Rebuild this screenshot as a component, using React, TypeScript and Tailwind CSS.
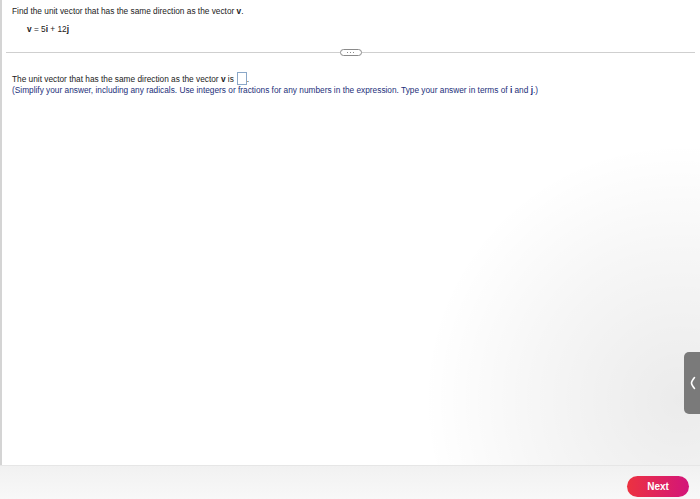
import React from "react";

const App = () => {
  return (
    <div
      className="relative flex h-[499px] w-[700px] flex-col overflow-hidden bg-white text-[#222]"
      style={{ fontFamily: '"Liberation Sans", Arial, sans-serif' }}
    >
      {/* soft shade on the right side */}
      <div className="pointer-events-none absolute right-[-240px] top-[140px] h-[520px] w-[520px] rounded-full bg-[radial-gradient(circle,rgba(0,0,0,0.08)_0%,rgba(0,0,0,0.035)_40%,rgba(0,0,0,0)_70%)]" />

      <div className="relative flex-1 border-l-2 border-[#d4d4d4] pt-[6px]">
        <div className="pl-[10px] text-[8.3px] leading-[10px]">
          Find the unit vector that has the same direction as the vector{" "}
          <b>v</b>.
        </div>
        <div className="mt-[8px] pl-[25px] text-[8.3px] leading-[10px]">
          <b>v</b> = 5<b>i</b> + 12<b>j</b>
        </div>

        <div className="mt-[15px] flex items-center pl-[4px] pr-[5px]">
          <div className="h-[1.5px] flex-1 bg-[#cfcfcf]" />
          <button className="flex h-[7px] w-[22px] items-center justify-center gap-[1.5px] rounded-full border border-[#8a8a8a] bg-white">
            <span className="h-[1.5px] w-[1.5px] rounded-full bg-[#666]" />
            <span className="h-[1.5px] w-[1.5px] rounded-full bg-[#666]" />
            <span className="h-[1.5px] w-[1.5px] rounded-full bg-[#666]" />
          </button>
          <div className="h-[1.5px] flex-1 bg-[#cfcfcf]" />
        </div>

        <div className="mt-[16px] flex items-center pl-[10px] text-[8.3px] leading-[12px]">
          <span>
            The unit vector that has the same direction as the vector <b>v</b>{" "}
            is
          </span>
          <span className="ml-[3px] inline-block h-[13px] w-[10px] border border-[#8aa7c8] bg-white" />
          <span>.</span>
        </div>
        <div className="mt-[0px] pl-[10px] text-[8.3px] leading-[10px] text-[#1c2f7a]">
          (Simplify your answer, including any radicals. Use integers or
          fractions for any numbers in the expression. Type your answer in
          terms of <b>i</b> and <b>j</b>.)
        </div>

        <div className="absolute right-0 top-[352px] flex h-[62px] w-[16px] items-center justify-center rounded-l-[5px] bg-[#7a7a7a] pl-[2px]">
          <svg width="6" height="14" viewBox="0 0 6 14" fill="none">
            <path
              d="M4.5 1.5 C2.5 4 1.5 5.5 1.5 7 C1.5 8.5 2.5 10 4.5 12.5"
              stroke="white"
              strokeWidth="1.6"
              strokeLinecap="round"
            />
          </svg>
        </div>
      </div>

      <div className="relative flex h-[34px] items-end justify-end border-t border-[#e6e6e6] bg-[linear-gradient(to_bottom,#f1f1f1,#f8f8f8)] pb-[2px] pr-[11px]">
        <button className="flex h-[21px] w-[62px] items-center justify-center rounded-full bg-[linear-gradient(to_right,#ec3240,#d3157a)] text-[10px] font-bold text-white">
          Next
        </button>
      </div>
    </div>
  );
};

export default App;
